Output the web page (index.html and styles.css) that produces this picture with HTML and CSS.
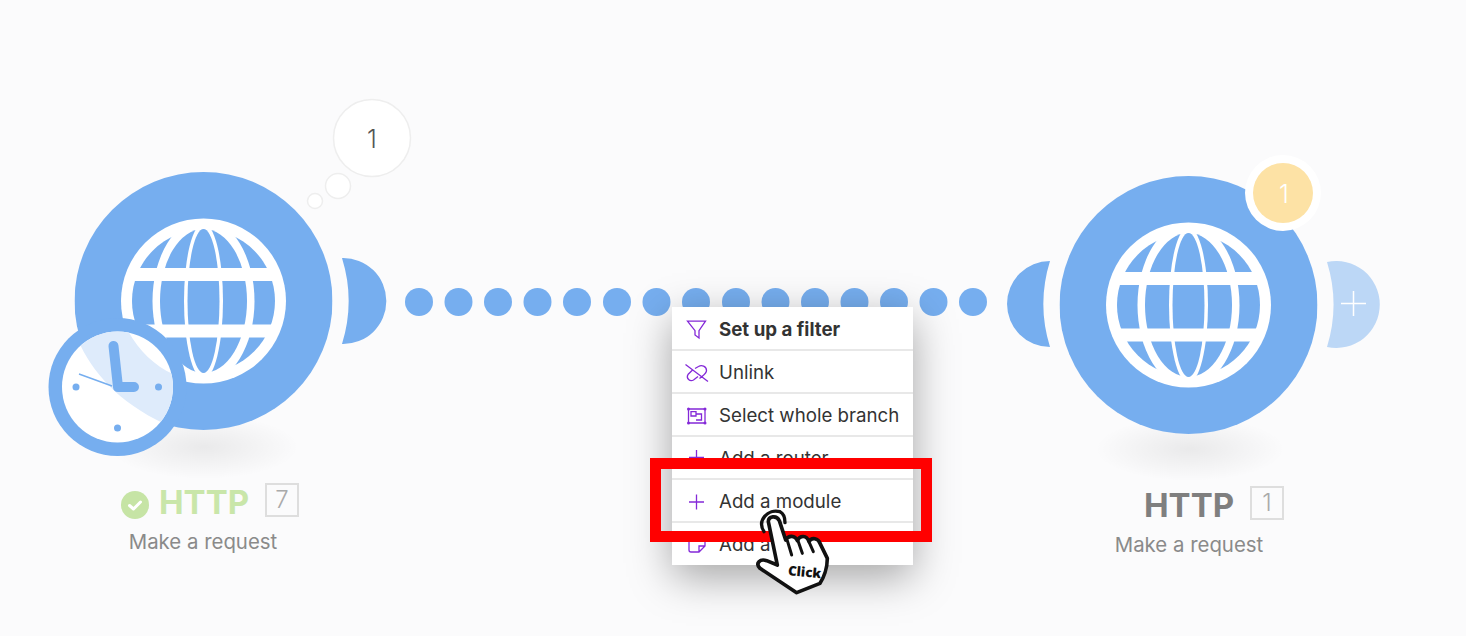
FILE: index.html
```html
<!DOCTYPE html>
<html lang="en">
	<head>
		<meta charset="UTF-8">
		<meta name="viewport" content="width=device-width, initial-scale=1.0">
		<title>HTTP scenario</title>
		<link rel="stylesheet" href="styles.css">
	</head>
	<body>

		<div class="canvas">

			<svg class="scenario" width="1466" height="636" viewBox="0 0 1466 636">
				<defs>
					<radialGradient id="floor">
						<stop offset="0" stop-color="#000" stop-opacity="0.07"/>
						<stop offset="1" stop-color="#000" stop-opacity="0"/>
					</radialGradient>
					<clipPath id="face-clip">
						<circle cx="117.5" cy="387" r="55.5"/>
					</clipPath>
					<clipPath id="globe-clip">
						<circle r="80"/>
					</clipPath>
					<symbol id="globe" viewBox="-129 -129 258 258">
						<circle class="blue" r="129"/>
						<circle class="white" r="82.5"/>
						<circle class="blue" r="71.5"/>
						<ellipse class="white" rx="51" ry="82"/>
						<ellipse class="blue" rx="43.5" ry="72"/>
						<ellipse class="white" rx="19.5" ry="78"/>
						<ellipse class="blue" rx="16" ry="72"/>
						<g clip-path="url(#globe-clip)">
							<rect class="white" x="-80" y="-33" width="160" height="13"/>
							<rect class="white" x="-80" y="23.5" width="160" height="13"/>
						</g>
					</symbol>
				</defs>

				<ellipse cx="204" cy="447" rx="95" ry="32" fill="url(#floor)"/>
				<ellipse cx="1190" cy="449" rx="95" ry="32" fill="url(#floor)"/>

				<!-- thought bubble -->
				<circle class="bubble" cx="372" cy="138" r="38.5"/>
				<circle class="bubble" cx="338" cy="186" r="12.5"/>
				<circle class="bubble" cx="315" cy="201" r="7.5"/>
				<text class="bubble-count" x="372" y="148">1</text>

				<!-- connectors -->
				<path class="blue" d="M342 258A43.02 43.02 0 1 1 342 344A145 145 0 0 0 342 258Z"/>
				<path class="blue" d="M1050 261A43 43 0 0 0 1050 347A145 145 0 0 1 1050 261Z"/>
				<path class="pale" d="M1327 262A43.500 43.500 0 1 1 1327 347A144 144 0 0 0 1327 262Z"/>
				<path class="plus" d="M1341 303.500H1366M1353.500 291V316"/>

				<g class="blue">
					<circle cx="419" cy="302" r="14"/>
					<circle cx="458.500" cy="302" r="14"/>
					<circle cx="498" cy="302" r="14"/>
					<circle cx="537.500" cy="302" r="14"/>
					<circle cx="577" cy="302" r="14"/>
					<circle cx="617" cy="302" r="14"/>
					<circle cx="656.500" cy="302" r="14"/>
					<circle cx="696" cy="302" r="14"/>
					<circle cx="736" cy="302" r="14"/>
					<circle cx="775.500" cy="302" r="14"/>
					<circle cx="815" cy="302" r="14"/>
					<circle cx="854.500" cy="302" r="14"/>
					<circle cx="894" cy="302" r="14"/>
					<circle cx="933.500" cy="302" r="14"/>
					<circle cx="973" cy="302" r="14"/>
				</g>

				<!-- left module -->
				<use href="#globe" x="74.500" y="172" width="258" height="258"/>

				<!-- clock -->
				<circle class="blue" cx="117.500" cy="387" r="69"/>
				<circle class="white" cx="117.500" cy="387" r="55.500"/>
				<path class="clock-band" clip-path="url(#face-clip)" d="M78 340C92 372 118 402 165 424L185 378C160 372 138 352 125 325Z"/>
				<path class="clock-hand" d="M113.500 346L118 387H134"/>
				<path class="clock-tick" d="M79 374L112 386"/>
				<circle class="blue" cx="76" cy="387" r="3.500"/>
				<circle class="blue" cx="158.500" cy="387" r="3.500"/>
				<circle class="blue" cx="117.500" cy="428" r="3.500"/>

				<!-- right module -->
				<use href="#globe" x="1059.500" y="176" width="258" height="258"/>
				<circle class="white" cx="1283" cy="193" r="38"/>
				<circle class="badge" cx="1283" cy="193" r="30"/>
				<text class="badge-count" x="1284" y="203">1</text>
			</svg>

			<div class="label label-left">
				<div class="label-title">
					<svg class="status" width="28" height="28" viewBox="0 0 28 28">
						<circle cx="14" cy="14" r="14"/>
						<path d="M8.500 14.500L12.500 18L19.500 11"/>
					</svg>
					<span class="name name-ok">HTTP</span>
					<span class="count">7</span>
				</div>
				<p class="label-sub">Make a request</p>
			</div>

			<div class="label label-right">
				<div class="label-title">
					<span class="name">HTTP</span>
					<span class="count">1</span>
				</div>
				<p class="label-sub">Make a request</p>
			</div>

			<ul class="menu">
				<li class="menu-item menu-item-strong">
					<svg class="menu-icon" viewBox="0 0 24 24"><path d="M2.500 3.200H20.500L14 12.700V20L10 17V12.700Z"/></svg>
					Set up a filter
				</li>
				<li class="menu-item">
					<svg class="menu-icon" viewBox="0 0 24 24"><path d="M0.500 3.500L23 20.500M7.500 9L3 13.500A4 4 0 0 0 8.500 19L13 15.500M10 7.500L13.500 5.500C16.500 3.500 21.500 5 21.500 9.500C21.500 12 19.500 13.500 17 15.500L14.500 17.500"/></svg>
					Unlink
				</li>
				<li class="menu-item">
					<svg class="menu-icon" viewBox="0 0 24 24">
						<path d="M3.500 5H20V19H3.500ZM6 7.700H11V12H6ZM11 10H16.500V16H11"/>
						<circle class="menu-dot" cx="3.500" cy="5" r="1.500"/>
						<circle class="menu-dot" cx="20" cy="5" r="1.500"/>
						<circle class="menu-dot" cx="3.500" cy="19" r="1.500"/>
						<circle class="menu-dot" cx="20" cy="19" r="1.500"/>
					</svg>
					Select whole branch
				</li>
				<li class="menu-item">
					<svg class="menu-icon" viewBox="0 0 24 24"><path d="M4 10.500H19M11.500 3V18"/></svg>
					Add a router
				</li>
				<li class="menu-item">
					<svg class="menu-icon" viewBox="0 0 24 24"><path d="M4 12H19M11.500 4.500V19.500"/></svg>
					Add a module
				</li>
				<li class="menu-item">
					<svg class="menu-icon" viewBox="0 0 24 24"><path d="M4 4H20V14L14 20H6A2 2 0 0 1 4 18ZM20 14H14V20"/></svg>
					Add a note
				</li>
			</ul>

			<div class="highlight"></div>

			<svg class="hand" width="100" height="100" viewBox="0 0 300 300">
				<path class="hand-ripple" d="M72 95C50 60 85 25 120 35C130 40 135 55 135 68"/>
				<path class="hand-body" d="M85 65C85 48 110 45 118 62L137 120C145 105 165 105 172 122C180 105 200 105 207 125C215 110 235 115 240 130L262 175C262 205 250 235 240 250L170 278L60 205C45 190 60 175 80 182L112 195Z"/>
				<path class="hand-line" d="M142 122L155 165M175 125L187 160M208 128L220 155"/>
				<text class="hand-text" x="143" y="226" transform="rotate(5 143 226)">Click</text>
			</svg>

		</div>

	</body>
</html>
```

FILE: styles.css
```css
* {
	box-sizing: border-box;
	margin: 0;
	padding: 0;
}
body {
	background-color: #fbfbfc;
	font-family: 'Inter', 'Liberation Sans', sans-serif;
	overflow: hidden;
}
.canvas {
	position: relative;
	width: 1466px;
	height: 636px;
}
.scenario {
	position: absolute;
	left: 0;
	top: 0;
}
.blue {
	fill: #76aeef;
}
.white {
	fill: #fff;
}
.pale {
	fill: #bcd7f6;
}
.plus {
	fill: none;
	stroke: #fff;
	stroke-width: 1.5;
}
.bubble {
	fill: #fff;
	stroke: #eee;
	stroke-width: 1.5;
}
.bubble-count {
	fill: #555;
	font-size: 25px;
	font-weight: 300;
	text-anchor: middle;
}
.badge {
	fill: #fde2a5;
}
.badge-count {
	fill: #fff;
	font-size: 25px;
	font-weight: 300;
	text-anchor: middle;
}
.clock-band {
	fill: #deebfb;
}
.clock-hand {
	fill: none;
	stroke: #76aeef;
	stroke-width: 10;
	stroke-linecap: round;
	stroke-linejoin: round;
}
.clock-tick {
	fill: none;
	stroke: #76aeef;
	stroke-width: 1.5;
}

/* module labels */
.label {
	position: absolute;
	display: flex;
	flex-direction: column;
	align-items: center;
	gap: 12px;
	width: 240px;
}
.label-left {
	left: 83px;
	top: 483px;
}
.label-right {
	left: 1069px;
	top: 486px;
}
.label-title {
	display: flex;
	align-items: center;
	height: 34px;
}
.label-left .label-title {
	margin-left: 14px;
}
.label-right .label-title {
	margin-left: 50px;
}
.status {
	margin-right: 10px;
	margin-top: 10px;
}
.status circle {
	fill: #c6e4a5;
}
.status path {
	fill: none;
	stroke: #fff;
	stroke-width: 3;
	stroke-linecap: round;
	stroke-linejoin: round;
}
.name {
	font-size: 33px;
	font-weight: 700;
	color: #7f7f7f;
	margin-top: 3px;
}
.name-ok {
	color: #c9e6a9;
}
.count {
	width: 34px;
	height: 34px;
	margin-left: 16px;
	border: 2px solid #dedede;
	color: #aaa;
	font-size: 24px;
	font-weight: 300;
	line-height: 30px;
	text-align: center;
}
.label-sub {
	font-size: 20.4px;
	color: #8a8a8a;
}

/* context menu */
.menu {
	position: absolute;
	left: 672px;
	top: 307px;
	width: 241px;
	padding-top: 1px;
	list-style: none;
	background-color: #fff;
	box-shadow: 0 12px 40px rgba(0, 0, 0, 0.35);
}
.menu-item {
	display: flex;
	align-items: center;
	gap: 10px;
	height: 43px;
	padding-left: 13px;
	padding-top: 2px;
	border-bottom: 2px solid #e8e8e8;
	color: #333;
	font-size: 18.7px;
}
.menu-item:last-child {
	height: 42px;
	padding-top: 0;
	border-bottom: none;
}
.menu-item-strong {
	font-weight: 700;
}
.menu-icon {
	width: 24px;
	height: 24px;
	fill: none;
	stroke: #8429d8;
	stroke-width: 1.3;
}
.menu-dot {
	fill: #8429d8;
	stroke: none;
}

/* tutorial overlay */
.highlight {
	position: absolute;
	left: 650px;
	top: 458px;
	width: 282px;
	height: 84px;
	border: 11px solid #f00;
}
.hand {
	position: absolute;
	left: 740px;
	top: 500px;
}
.hand-ripple {
	fill: none;
	stroke: #111;
	stroke-width: 10;
	stroke-linecap: round;
}
.hand-body {
	fill: #fff;
	stroke: #111;
	stroke-width: 11;
	stroke-linejoin: round;
}
.hand-line {
	fill: none;
	stroke: #111;
	stroke-width: 9;
	stroke-linecap: round;
}
.hand-text {
	fill: #111;
	font-family: 'Open Sans', sans-serif;
	font-size: 40px;
	font-weight: 800;
}
```
